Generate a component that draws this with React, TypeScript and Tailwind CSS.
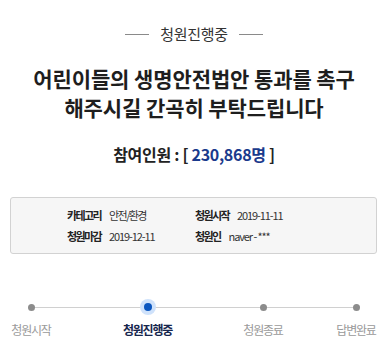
import React from 'react'

const font = { fontFamily: '"Noto Sans CJK KR", "Noto Sans", sans-serif' }

const steps = [
  { label: '청원시작', active: false, w: 'w-[42px]', ml: '' },
  { label: '청원진행중', active: true, w: 'w-[53px]', ml: 'ml-[69px]' },
  { label: '청원종료', active: false, w: 'w-[42px]', ml: 'ml-[68px]' },
  { label: '답변완료', active: false, w: 'w-[42px]', ml: 'ml-[51px]' },
]

function InfoCell({ label, value, num }: { label: string; value: string; num?: boolean }) {
  return (
    <div className="flex items-center h-[21px] w-[128px]">
      <span className="text-[11px] font-bold text-[#222] tracking-[-1.6px]">{label}</span>
      <span
        className={`ml-[8px] text-[11px] text-[#333] ${num ? 'tracking-[-1.1px]' : 'tracking-[-1.6px]'}`}
      >
        {value}
      </span>
    </div>
  )
}

export default function App() {
  return (
    <div className="w-[388px] h-[352px] bg-white overflow-hidden flex flex-col items-center" style={font}>
      {/* status header */}
      <div className="mt-[24px] h-[20px] flex items-center">
        <span className="w-[24px] h-px bg-[#8a8a8a]" />
        <span className="mx-[11px] text-[15px] leading-[20px] text-[#333] tracking-[-0.3px]">청원진행중</span>
        <span className="w-[24px] h-px bg-[#8a8a8a]" />
      </div>

      {/* title */}
      <h1 className="mt-[20px] text-center text-[21px] leading-[29px] font-bold text-[#1e1e1e] tracking-[-0.1px] whitespace-nowrap">
        어린이들의 생명안전법안 통과를 촉구
        <br />
        해주시길 간곡히 부탁드립니다
      </h1>

      {/* participants */}
      <div className="mt-[21px] h-[22px] leading-[22px] text-[16px] font-bold text-[#222] tracking-[-0.3px]">
        참여인원 : [ <span className="text-[#1a3a8c]">230,868명</span> ]
      </div>

      {/* info box */}
      <div className="mt-[32px] w-[367px] self-start ml-[10px] h-[57px] border border-[#d2d2d2] rounded-[3px] bg-[#f6f6f6] pl-[56px] py-[7px]">
        <div className="flex">
          <InfoCell label="카테고리" value="안전/환경" />
          <InfoCell label="청원시작" value="2019-11-11" num />
        </div>
        <div className="flex">
          <InfoCell label="청원마감" value="2019-12-11" num />
          <InfoCell label="청원인" value="naver - ***" num />
        </div>
      </div>

      {/* progress */}
      <div className="mt-[45px] self-start ml-[10px] relative">
        <div className="absolute left-[21px] w-[324px] top-[8px] h-px bg-[#d0d0d0]" />
        <div className="flex">
          {steps.map((s) => (
            <div key={s.label} className={`${s.w} ${s.ml} flex flex-col items-center relative`}>
              <div className="h-[16px] w-[16px] flex items-center justify-center">
                {s.active ? (
                  <div className="w-[16px] h-[16px] rounded-full bg-[#cfe2fb] flex items-center justify-center">
                    <div className="w-[8px] h-[8px] rounded-full bg-[#0b57c0]" />
                  </div>
                ) : (
                  <div className="w-[7px] h-[7px] rounded-full bg-[#8c8c8c]" />
                )}
              </div>
              <div
                className={`mt-[7px] whitespace-nowrap text-[12px] leading-[16px] tracking-[-1.2px] ${
                  s.active ? 'font-bold text-[#16264d]' : 'text-[#9a9a9a]'
                }`}
              >
                {s.label}
              </div>
            </div>
          ))}
        </div>
      </div>
    </div>
  )
}
